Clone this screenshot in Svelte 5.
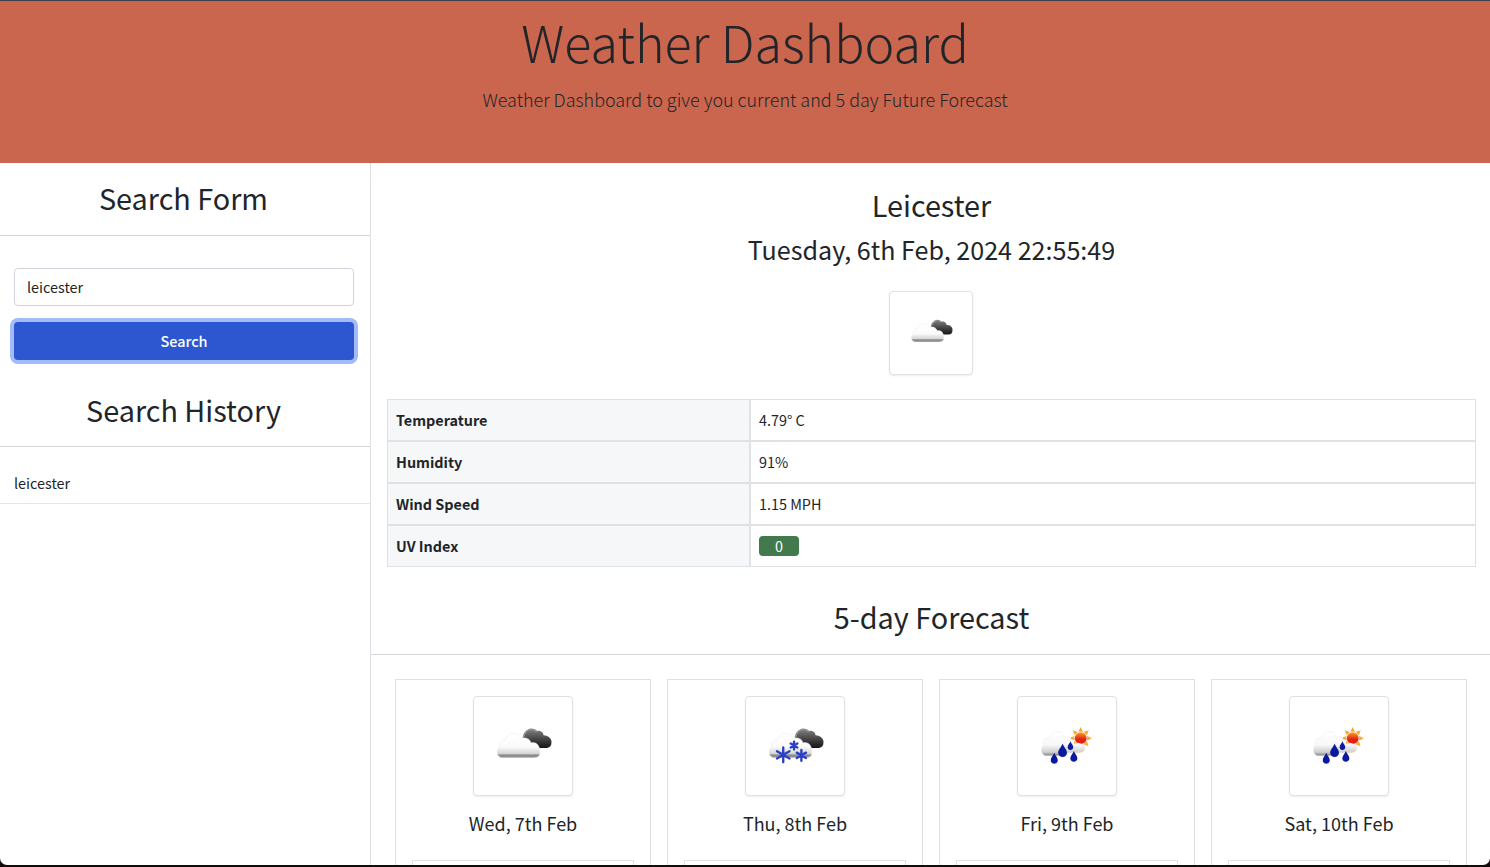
<script>
	const current = [
		{ label: 'Temperature', value: '4.79° C' },
		{ label: 'Humidity', value: '91%' },
		{ label: 'Wind Speed', value: '1.15 MPH' },
	];

	const forecast = [
		{ date: 'Wed, 7th Feb', icon: 'clouds' },
		{ date: 'Thu, 8th Feb', icon: 'snow' },
		{ date: 'Fri, 9th Feb', icon: 'rain' },
		{ date: 'Sat, 10th Feb', icon: 'rain' },
	];

	const cloudPath =
		'M29 62C23 62 22 54 26 51C25 46 29 43 32 44C34 35 45 35 48 43C52 40 58 43 58 47C63 45 68 50 67 56C68 60 65 62 61 62Z';
	const darkPath =
		'M51 42C51 35 59 30 64 35C67 33 71 36 71 39C76 39 80 43 79 47C79 50 77 52 74 52H62C60 47 55 44 51 42Z';
	const rainCloud =
		'M29 60C23 60 23 52 26 49C25 44 29 41 32 42C34 33 45 33 47 41C51 39 56 43 56 48C61 46 68 48 68 52C69 55 65 57 62 57H46C45 59 44 60 42 60Z';
	const drop = 'M0 -6C1 -3 3.600 -1 3.600 1.500C3.600 3.600 2 5 0 5C-2 5 -3.600 3.600 -3.600 1.500C-3.600 -1 -1 -3 0 -6Z';
	const flakes = [
		{ x: 38, y: 59, r: 7.5 },
		{ x: 49, y: 49.5, r: 4 },
		{ x: 56.5, y: 59.5, r: 5.5 },
	];
</script>

{#snippet weatherIcon(kind, size)}
	<svg class="icon" width={size} height={size} viewBox="0 0 100 100" aria-hidden="true">
		{#if kind === 'rain'}
			{#each [-45, 0, 45, 90, 135, 180, 225, 270] as a}
				<path d="M61.700 35.500L64 30.500L66.300 35.500Z" fill="#f5a93a" transform={`rotate(${a} 64 42)`} />
			{/each}
			<circle cx="64" cy="42" r="6" fill="url(#sunFill)" />
			<path d={rainCloud} fill="url(#rainCloudFill)" stroke="#e6e6e6" stroke-width="0.500" />
			<path d={drop} transform="translate(45.500 55) scale(1.250)" fill="#0a1a9c" />
			<path d={drop} transform="translate(53.500 50) scale(.8)" fill="#0a1a9c" />
			<path d={drop} transform="translate(37 63)" fill="#0a1a9c" />
			<path d={drop} transform="translate(57 61)" fill="#0a1a9c" />
		{:else}
			<path d={darkPath} fill="url(#darkFill)" />
			<path d="M50.500 42C50.500 36 57 30 64 35" fill="none" stroke="#8d8d8d" stroke-width="1.600" />
			<path d={cloudPath} fill="url(#cloudFill)" stroke="#e6e6e6" stroke-width="0.500" />
			{#if kind === 'snow'}
				<g stroke="#2b3fc4" stroke-width="2.400" stroke-linecap="round">
					{#each flakes as f}
						<path d={`M${f.x} ${f.y - f.r}V${f.y + f.r}M${f.x - f.r * 0.85} ${f.y - f.r * 0.5}L${f.x + f.r * 0.85} ${f.y + f.r * 0.5}M${f.x + f.r * 0.85} ${f.y - f.r * 0.5}L${f.x - f.r * 0.85} ${f.y + f.r * 0.5}`} />
					{/each}
				</g>
			{/if}
		{/if}
	</svg>
{/snippet}

<svg class="defs" width="0" height="0" aria-hidden="true">
	<defs>
		<linearGradient id="cloudFill" x1="0" y1="0" x2="0" y2="1">
			<stop offset="0" stop-color="#ffffff" />
			<stop offset="0.55" stop-color="#fbfbfb" />
			<stop offset="0.84" stop-color="#d4d4d4" />
			<stop offset="0.88" stop-color="#8e8e8e" />
			<stop offset="1" stop-color="#8e8e8e" />
		</linearGradient>
		<linearGradient id="rainCloudFill" x1="0" y1="0" x2="0" y2="1">
			<stop offset="0" stop-color="#ffffff" />
			<stop offset="0.55" stop-color="#f8f8f8" />
			<stop offset="0.85" stop-color="#cfcfcf" />
			<stop offset="1" stop-color="#7f7f7f" />
		</linearGradient>
		<linearGradient id="darkFill" x1="0" y1="0" x2="0" y2="1">
			<stop offset="0" stop-color="#808080" />
			<stop offset="0.6" stop-color="#3c3c3c" />
			<stop offset="1" stop-color="#161616" />
		</linearGradient>
		<linearGradient id="sunFill" x1="0" y1="0" x2="0" y2="1">
			<stop offset="0" stop-color="#f5a020" />
			<stop offset="0.6" stop-color="#e6200f" />
		</linearGradient>
	</defs>
</svg>

<div class="window">
	<header class="hero">
		<h1>Weather Dashboard</h1>
		<p>Weather Dashboard to give you current and 5 day Future Forecast</p>
	</header>

	<div class="columns">
		<aside class="sidebar">
			<h2 class="section-title side-title first">Search Form</h2>
			<form class="search" onsubmit={(e) => e.preventDefault()}>
				<input type="text" value="leicester" />
				<button type="submit">Search</button>
			</form>
			<h2 class="section-title side-title history-title">Search History</h2>
			<div class="history-item">leicester</div>
		</aside>

		<main class="content">
			<h2 class="city">Leicester</h2>
			<h3 class="date">Tuesday, 6th Feb, 2024 22:55:49</h3>
			<div class="today-icon thumb">{@render weatherIcon('clouds', 74)}</div>

			<table>
				<tbody>
					{#each current as row}
						<tr>
							<th>{row.label}</th>
							<td>{row.value}</td>
						</tr>
					{/each}
					<tr>
						<th>UV Index</th>
						<td><span class="uv">0</span></td>
					</tr>
				</tbody>
			</table>

			<h2 class="section-title forecast-title">5-day Forecast</h2>

			<div class="cards">
				{#each forecast as day}
					<article class="card">
						<div class="card-icon thumb">{@render weatherIcon(day.icon, 100)}</div>
						<div class="card-date">{day.date}</div>
						<div class="card-table"></div>
					</article>
				{/each}
			</div>
		</main>
	</div>
</div>

<style>
	:global(body) {
		background: #14090b;
		overflow: hidden;
	}

	.defs {
		position: absolute;
	}

	.window {
		height: 864px;
		border-top: 1px solid #3a4046;
		border-radius: 0 0 7px 7px;
		background: #fff;
		overflow: hidden;
		display: flex;
		flex-direction: column;
		color: #212529;
		font-family: 'Noto Sans CJK SC', 'Noto Sans', sans-serif;
		font-size: 14.4px;
	}

	.hero {
		height: 162px;
		flex: none;
		background: #cb664e;
		text-align: center;
	}

	.hero h1 {
		margin: 0;
		padding-top: 7px;
		font-size: 50.25px;
		line-height: 67px;
		font-weight: 300;
	}

	.hero p {
		margin: 12px 0 0;
		font-size: 17.95px;
		line-height: 24px;
		font-weight: 300;
	}

	.columns {
		flex: 1;
		display: flex;
		min-height: 0;
	}

	.sidebar {
		width: 370px;
		flex: none;
		border-right: 1px solid #dee2e6;
	}

	.section-title {
		margin: 0;
		padding-bottom: 18px;
		border-bottom: 1px solid #d3d6da;
		font-size: 28.8px;
		line-height: 39px;
		font-weight: 400;
		text-align: center;
	}

	.side-title {
		padding-right: 3px;
	}

	.section-title.first {
		padding-top: 15px;
	}

	.section-title.history-title {
		padding-bottom: 17px;
	}

	.search {
		display: flex;
		flex-direction: column;
		gap: 16px;
		padding: 32px 16px 30px 14px;
	}

	.search input {
		height: 38px;
		box-sizing: border-box;
		padding: 0 12px 2px;
		border: 1px solid #ced4da;
		border-radius: 4px;
		color: #212529;
		font: inherit;
		outline: none;
	}

	.search button {
		height: 38px;
		padding: 0 0 2px;
		border: 0;
		border-radius: 4px;
		background: #2c57d1;
		box-shadow: 0 0 0 4px #a3bbf8;
		color: #fff;
		font: inherit;
		font-weight: 500;
	}

	.history-item {
		padding: 24px 14px 8px;
		line-height: 24px;
		border-bottom: 1px solid #e4e6e9;
	}

	.content {
		flex: 1;
		min-width: 0;
		text-align: center;
	}

	.city {
		margin: 22px 0 0;
		padding-left: 2px;
		font-size: 28.8px;
		line-height: 39px;
		font-weight: 400;
	}

	.date {
		margin: 8px 0 0;
		padding-left: 2px;
		font-size: 25.1px;
		line-height: 34px;
		font-weight: 400;
	}

	.thumb {
		box-sizing: border-box;
		display: flex;
		align-items: center;
		justify-content: center;
		border: 1px solid #dee2e6;
		border-radius: 4px;
		background: #fff;
		box-shadow: 0 1px 2px rgba(0, 0, 0, 0.08);
	}

	.today-icon {
		width: 84px;
		height: 84px;
		margin: 25px auto 0 518px;
	}

	table {
		width: 1089px;
		margin: 24px 0 0 16px;
		border-collapse: separate;
		border-spacing: 0;
		text-align: left;
	}

	th,
	td {
		height: 42px;
		box-sizing: border-box;
		padding: 0 8px 2px;
		border: 1px solid #dee2e6;
		font-weight: 400;
	}

	th {
		width: 363px;
		background: #f6f7f9;
		font-weight: 700;
	}

	.uv {
		display: block;
		width: 40px;
		height: 20px;
		margin-top: 2px;
		border-radius: 4px;
		background: #437a4d;
		color: #fff;
		line-height: 20px;
		text-align: center;
	}

	.section-title.forecast-title {
		margin-top: 30px;
		padding-left: 2px;
	}

	.cards {
		display: flex;
		gap: 16px;
		padding: 24px 0 0 24px;
	}

	.card {
		width: 256px;
		flex: none;
		box-sizing: border-box;
		border: 1px solid #dee2e6;
		padding: 16px 16px 0;
	}

	.card-icon {
		width: 100px;
		height: 100px;
		margin: 0 auto;
	}

	.card-date {
		margin-top: 15px;
		font-size: 18px;
		line-height: 24px;
	}

	.card-table {
		height: 40px;
		margin-top: 25px;
		border: 1px solid #dee2e6;
	}
</style>
